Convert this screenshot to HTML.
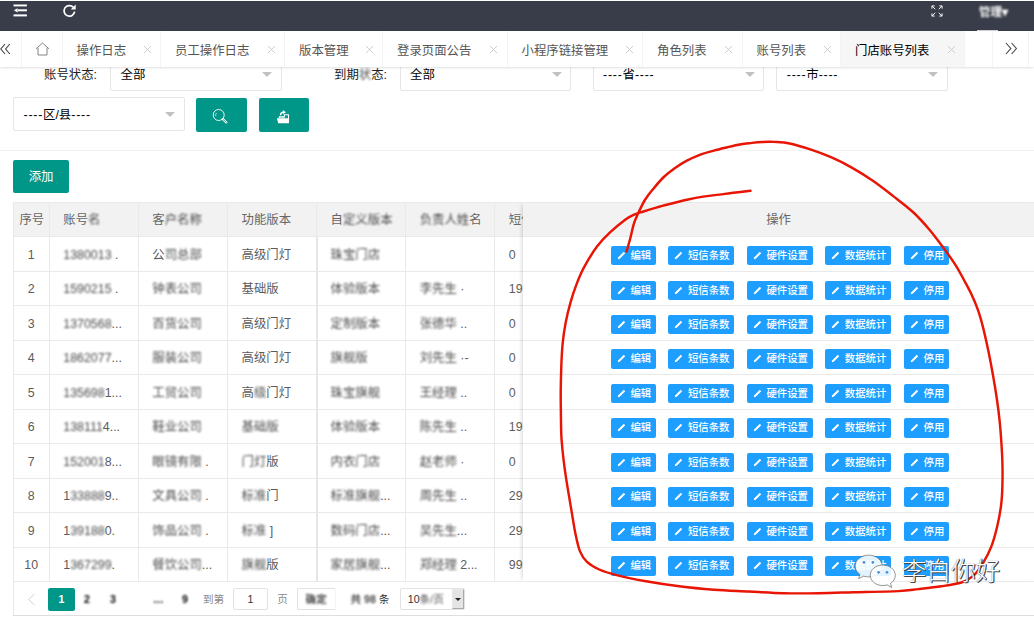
<!DOCTYPE html><html lang="zh-CN"><head><meta charset="utf-8"><title>门店账号列表</title><style>
*{box-sizing:border-box;margin:0;padding:0}
html,body{width:1034px;height:617px;overflow:hidden;background:#fff}
body{font-family:"Liberation Sans","Noto Sans CJK SC",sans-serif;font-size:12.4px;color:#333;position:relative}
.abs{position:absolute}
#hdr{z-index:3;left:0;top:1px;width:1034px;height:30px;background:#393d49}
#tabs{z-index:3;left:0;top:31px;width:1034px;height:36px;background:#fff;box-shadow:0 1px 2px rgba(0,0,0,.12)}
.tab{position:absolute;top:0;height:36px;line-height:36px;color:#555;font-size:12.4px;white-space:nowrap;border-right:1px solid #f4f4f4}
.tab span.t{position:absolute;top:1.5px}
.tab .x{position:absolute;top:13.5px;width:9px;height:9px}
.tab.on{background:#f6f6f6;color:#000}
.sel{position:absolute;height:34px;border:1px solid #e6e6e6;border-radius:2px;background:#fff;line-height:32px;color:#000;font-size:12.4px}
.sel .t{position:absolute;left:9.5px;top:1px;white-space:nowrap}
.sel .a{position:absolute;right:8.5px;top:14px;width:0;height:0;border-left:5px solid transparent;border-right:5px solid transparent;border-top:5.5px solid #c2c2c2}
.ds{font-weight:normal;letter-spacing:.75px}
.lbl{position:absolute;white-space:nowrap;color:#222;font-size:12.4px;line-height:16px}
.gbtn{position:absolute;background:#009688;border-radius:2px;color:#fff}
.hl{position:absolute;height:1px;background:#e9e9e9}
.vl{position:absolute;width:1px;background:#e9e9e9}
.th{position:absolute;color:#666;font-size:12.4px;line-height:34px;white-space:nowrap}
.td{position:absolute;color:#5c5c5c;font-size:12.4px;line-height:34px;white-space:nowrap}
.bl{filter:blur(.9px);opacity:.85;color:#2a2a2a}
.bb{position:absolute;height:19.4px;background:#1e9fff;border-radius:2px;color:#fff;font-size:10.4px;line-height:19.4px;font-weight:500;white-space:nowrap}
.bb svg{position:absolute;left:6px;top:5px;width:9px;height:9px}
.bb span{position:absolute;left:19.8px;top:0}
</style></head><body>
<div id="hdr" class="abs">
<svg class="abs" style="left:12.5px;top:3px;width:15px;height:14px" viewBox="0 0 15 14"><g fill="#fff"><rect x="0.5" y="0.5" width="13.4" height="1.9"/><rect x="4.6" y="5.3" width="9.3" height="2"/><rect x="0.5" y="10.4" width="13.4" height="2"/><path d="M0.9 6.3 L4.6 4.2 L4.6 8.4 Z"/></g></svg>
<svg class="abs" style="left:62px;top:3px;width:15px;height:14px" viewBox="0 0 15 14"><path d="M11.2 3.2 A5.3 5.3 0 1 0 12.6 7.6" fill="none" stroke="#fff" stroke-width="1.7"/><path d="M13.7 0.6 L13.7 5.6 L8.7 5.6 Z" fill="#fff"/></svg>
<svg class="abs" style="left:930.5px;top:3.5px;width:12px;height:12px" viewBox="0 0 13 13"><g stroke="#fff" stroke-width="1" fill="none"><path d="M1 4V1h3M1 1l3.6 3.6"/><path d="M9 1h3v3M12 1L8.400 4.6"/><path d="M1 9v3h3M1 12l3.600-3.600"/><path d="M12 9v3H9M12 12L8.400 8.400"/></g></svg>
<div class="abs" style="left:979px;top:2.500px;color:#fff;font-size:11.500px;line-height:16px;filter:blur(.9px);font-weight:bold">管理▾</div>
<div class="abs" style="left:977px;top:29px;width:21px;height:1px;background:#cfd0d4"></div>
</div>
<div id="tabs" class="abs">
<div class="tab" style="left:0;width:22px"><svg class="abs" style="left:0;top:12px;width:11px;height:12px" viewBox="0 0 11 12"><path d="M5 1L0.800 6L5 11M9.800 1L5.600 6L9.800 11" fill="none" stroke="#444" stroke-width="1.1"/></svg></div>
<div class="tab" style="left:22px;width:41px"><svg class="abs" style="left:12.5px;top:11px;width:15px;height:14px" viewBox="0 0 15 14"><path d="M1 6.800L7.500 1L14 6.800M3 5.600V13H12V5.600" fill="none" stroke="#777" stroke-width="0.9"/></svg></div>
<div class="tab" style="left:62.5px;width:98.5px"><span class="t" style="left:14px">操作日志</span><svg class="x" style="left:80.0px" viewBox="0 0 9 9"><path d="M1 1L8 8M8 1L1 8" stroke="#c8c8c8" stroke-width="0.9" fill="none"/></svg></div>
<div class="tab" style="left:161.0px;width:124.0px"><span class="t" style="left:14px">员工操作日志</span><svg class="x" style="left:105.5px" viewBox="0 0 9 9"><path d="M1 1L8 8M8 1L1 8" stroke="#c8c8c8" stroke-width="0.9" fill="none"/></svg></div>
<div class="tab" style="left:285.0px;width:98.0px"><span class="t" style="left:14px">版本管理</span><svg class="x" style="left:79.5px" viewBox="0 0 9 9"><path d="M1 1L8 8M8 1L1 8" stroke="#c8c8c8" stroke-width="0.9" fill="none"/></svg></div>
<div class="tab" style="left:383.0px;width:124.5px"><span class="t" style="left:14px">登录页面公告</span><svg class="x" style="left:106.0px" viewBox="0 0 9 9"><path d="M1 1L8 8M8 1L1 8" stroke="#c8c8c8" stroke-width="0.9" fill="none"/></svg></div>
<div class="tab" style="left:507.5px;width:135.5px"><span class="t" style="left:14px">小程序链接管理</span><svg class="x" style="left:117.0px" viewBox="0 0 9 9"><path d="M1 1L8 8M8 1L1 8" stroke="#c8c8c8" stroke-width="0.9" fill="none"/></svg></div>
<div class="tab" style="left:643.0px;width:99.5px"><span class="t" style="left:14px">角色列表</span><svg class="x" style="left:81.0px" viewBox="0 0 9 9"><path d="M1 1L8 8M8 1L1 8" stroke="#c8c8c8" stroke-width="0.9" fill="none"/></svg></div>
<div class="tab" style="left:742.5px;width:98.5px"><span class="t" style="left:14px">账号列表</span><svg class="x" style="left:80.0px" viewBox="0 0 9 9"><path d="M1 1L8 8M8 1L1 8" stroke="#c8c8c8" stroke-width="0.9" fill="none"/></svg></div>
<div class="tab on" style="left:841.0px;width:124.0px"><span class="t" style="left:14px">门店账号列表</span><svg class="x" style="left:105.5px" viewBox="0 0 9 9"><path d="M1 1L8 8M8 1L1 8" stroke="#c8c8c8" stroke-width="0.9" fill="none"/></svg></div>
<div class="tab" style="left:992px;width:37px;border-left:1px solid #f4f4f4"><svg class="abs" style="left:12px;top:11px;width:13px;height:13px" viewBox="0 0 13 13"><path d="M1 1L5.800 6.500L1 12M6.600 1L11.400 6.500L6.600 12" fill="none" stroke="#444" stroke-width="1.1"/></svg></div>
</div>
<div class="abs" style="left:0;top:0;width:1034px;height:617px;z-index:0">
<div class="lbl" style="left:44px;top:67px">账号状态:</div>
<div class="sel" style="left:110.0px;top:56.5px;width:171.5px"><span class="t">全部</span><i class="a"></i></div>
<div class="lbl" style="left:334px;top:67px">到期<span class="bl">状</span>态:</div>
<div class="sel" style="left:399.5px;top:56.5px;width:171.5px"><span class="t">全部</span><i class="a"></i></div>
<div class="sel" style="left:592.5px;top:56.5px;width:171.5px"><span class="t"><b class="ds">----</b>省<b class="ds">----</b></span><i class="a"></i></div>
<div class="sel" style="left:776.3px;top:56.5px;width:171.5px"><span class="t"><b class="ds">----</b>市<b class="ds">----</b></span><i class="a"></i></div>
<div class="sel" style="left:13.0px;top:97.0px;width:171.5px"><span class="t"><b class="ds">----</b>区/县<b class="ds">----</b></span><i class="a"></i></div>
</div>
<div class="gbtn" style="left:196.3px;top:98.3px;width:50.4px;height:33.6px"><svg class="abs" style="left:16px;top:10px;width:17px;height:17px" viewBox="0 0 17 17"><circle cx="6.700" cy="7" r="5.500" fill="none" stroke="#fff" stroke-width="0.9"/><path d="M3.800 8.200A3.200 3.200 0 0 1 4.500 5" fill="none" stroke="#fff" stroke-width="0.7"/><path d="M10.800 11.200L14.300 14.300" stroke="#fff" stroke-width="2.300" stroke-linecap="round"/><path d="M11.300 11.700L14 14" stroke="#009688" stroke-width="0.800" stroke-linecap="round"/></svg></div>
<div class="gbtn" style="left:259px;top:98.3px;width:50.4px;height:33.6px"><svg class="abs" style="left:11px;top:5.700px;width:26px;height:24px" viewBox="270 104 26 24"><path d="M276.900 118.300H288.800L289 123.200H278.200Z" fill="#fff"/><path d="M279.300 118.300V116.900H284.300V114.700H288.500V122" fill="none" stroke="#fff" stroke-width="1.100"/><path d="M280 117.600H284.800" stroke="#fff" stroke-width=".6" stroke-opacity=".7"/><path d="M280.500 115.300C280.500 113.200 281.700 112.200 283.400 112.200" fill="none" stroke="#fff" stroke-width="1.400"/><path d="M282.900 109.900L286 112.300L282.900 114.300Z" fill="#fff"/></svg></div>
<div class="hl" style="left:0;top:149.5px;width:1034px;background:#f2f2f2"></div>
<div class="gbtn" style="left:13px;top:159.8px;width:56.2px;height:33.2px;font-size:12.4px;line-height:35px;text-align:center">添加</div>
<div class="abs" style="left:13px;top:202.0px;width:1021px;height:34.8px;background:#f2f2f2"></div>
<div class="hl" style="left:13px;top:201.5px;width:1021px"></div>
<div class="hl" style="left:13px;top:236.3px;width:1021px"></div>
<div class="hl" style="left:13px;top:270.8px;width:1021px"></div>
<div class="hl" style="left:13px;top:305.2px;width:1021px"></div>
<div class="hl" style="left:13px;top:339.7px;width:1021px"></div>
<div class="hl" style="left:13px;top:374.2px;width:1021px"></div>
<div class="hl" style="left:13px;top:408.6px;width:1021px"></div>
<div class="hl" style="left:13px;top:443.1px;width:1021px"></div>
<div class="hl" style="left:13px;top:477.6px;width:1021px"></div>
<div class="hl" style="left:13px;top:512.1px;width:1021px"></div>
<div class="hl" style="left:13px;top:546.5px;width:1021px"></div>
<div class="hl" style="left:13px;top:581.0px;width:1021px"></div>
<div class="vl" style="left:12.5px;top:202.0px;height:414.0px"></div>
<div class="vl" style="left:48.8px;top:202.0px;height:379.5px"></div>
<div class="vl" style="left:137.8px;top:202.0px;height:379.5px"></div>
<div class="vl" style="left:227.0px;top:202.0px;height:379.5px"></div>
<div class="vl" style="left:316.1px;top:202.0px;height:379.5px"></div>
<div class="vl" style="left:405.2px;top:202.0px;height:379.5px"></div>
<div class="vl" style="left:494.3px;top:202.0px;height:379.5px"></div>
<div class="hl" style="left:13px;top:615.3px;width:1021px;background:#dedede"></div>
<div class="vl" style="left:315.6px;top:236.8px;height:344.7px;width:2.6px;background:#e6e6e6"></div>
<div class="abs" style="left:523.2px;top:202.0px;width:510.8px;height:379.5px;background:#fff;box-shadow:-4px 0 4px -3px rgba(0,0,0,.16)"></div>
<div class="abs" style="left:523.2px;top:202.0px;width:510.8px;height:34.8px;background:#f2f2f2"></div>
<div class="hl" style="left:523.2px;top:201.5px;width:510.8px"></div>
<div class="hl" style="left:523.2px;top:236.3px;width:510.8px"></div>
<div class="hl" style="left:523.2px;top:270.8px;width:510.8px"></div>
<div class="hl" style="left:523.2px;top:305.2px;width:510.8px"></div>
<div class="hl" style="left:523.2px;top:339.7px;width:510.8px"></div>
<div class="hl" style="left:523.2px;top:374.2px;width:510.8px"></div>
<div class="hl" style="left:523.2px;top:408.6px;width:510.8px"></div>
<div class="hl" style="left:523.2px;top:443.1px;width:510.8px"></div>
<div class="hl" style="left:523.2px;top:477.6px;width:510.8px"></div>
<div class="hl" style="left:523.2px;top:512.1px;width:510.8px"></div>
<div class="hl" style="left:523.2px;top:546.5px;width:510.8px"></div>
<div class="hl" style="left:523.2px;top:581.0px;width:510.8px"></div>
<div class="th" style="left:19.4px;top:203.3px">序号</div>
<div class="th" style="left:63.3px;top:203.3px">账号<span class="bl">名</span></div>
<div class="th" style="left:152.3px;top:203.3px">客<span class="bl">户名称</span></div>
<div class="th" style="left:241.5px;top:203.3px">功能版本</div>
<div class="th" style="left:330.6px;top:203.3px">自<span class="bl">定义版本</span></div>
<div class="th" style="left:419.7px;top:203.3px"><span class="bl">负责人姓</span>名</div>
<div class="abs" style="left:494.800px;top:203.3px;width:28.400px;height:34px;overflow:hidden"><div class="th" style="left:14px;top:0">短信条数</div></div>
<div class="th" style="left:523.2px;top:203.3px;width:510.8px;text-align:center">操作</div>
<div class="td" style="left:13px;top:237.7px;width:36.3px;text-align:center">1</div>
<div class="td" style="left:63.3px;top:237.7px"><span class="bl">1380013</span> .</div>
<div class="td" style="left:152.3px;top:237.7px">公<span class="bl">司总部</span></div>
<div class="td" style="left:241.5px;top:237.7px">高级门灯</div>
<div class="td" style="left:330.6px;top:237.7px"><span class="bl">珠宝门店</span></div>
<div class="abs" style="left:494.800px;top:237.7px;width:28.400px;height:34px;overflow:hidden"><div class="td" style="left:14px;top:0">0</div></div>
<div class="bb" style="left:610.6px;top:246.0px;width:45.1px"><svg viewBox="0 0 9 9"><path d="M0.800 8.200L1.300 6.300L6.800 0.800L8.200 2.200L2.700 7.700Z" fill="#fff"/></svg><span>编辑</span></div>
<div class="bb" style="left:668.1px;top:246.0px;width:66.0px"><svg viewBox="0 0 9 9"><path d="M0.800 8.200L1.300 6.300L6.800 0.800L8.200 2.200L2.700 7.700Z" fill="#fff"/></svg><span>短信条数</span></div>
<div class="bb" style="left:746.6px;top:246.0px;width:66.0px"><svg viewBox="0 0 9 9"><path d="M0.800 8.200L1.300 6.300L6.800 0.800L8.200 2.200L2.700 7.700Z" fill="#fff"/></svg><span>硬件设置</span></div>
<div class="bb" style="left:825.0px;top:246.0px;width:66.2px"><svg viewBox="0 0 9 9"><path d="M0.800 8.200L1.300 6.300L6.800 0.800L8.200 2.200L2.700 7.700Z" fill="#fff"/></svg><span>数据统计</span></div>
<div class="bb" style="left:903.8px;top:246.0px;width:45.0px"><svg viewBox="0 0 9 9"><path d="M0.800 8.200L1.300 6.300L6.800 0.800L8.200 2.200L2.700 7.700Z" fill="#fff"/></svg><span>停用</span></div>
<div class="td" style="left:13px;top:272.2px;width:36.3px;text-align:center">2</div>
<div class="td" style="left:63.3px;top:272.2px"><span class="bl">1590215</span> .</div>
<div class="td" style="left:152.3px;top:272.2px"><span class="bl">钟表公司</span></div>
<div class="td" style="left:241.5px;top:272.2px">基础版</div>
<div class="td" style="left:330.6px;top:272.2px"><span class="bl">体验版本</span></div>
<div class="td" style="left:419.7px;top:272.2px"><span class="bl">李先生</span> ·</div>
<div class="abs" style="left:494.800px;top:272.2px;width:28.400px;height:34px;overflow:hidden"><div class="td" style="left:14px;top:0">19</div></div>
<div class="bb" style="left:610.6px;top:280.5px;width:45.1px"><svg viewBox="0 0 9 9"><path d="M0.800 8.200L1.300 6.300L6.800 0.800L8.200 2.200L2.700 7.700Z" fill="#fff"/></svg><span>编辑</span></div>
<div class="bb" style="left:668.1px;top:280.5px;width:66.0px"><svg viewBox="0 0 9 9"><path d="M0.800 8.200L1.300 6.300L6.800 0.800L8.200 2.200L2.700 7.700Z" fill="#fff"/></svg><span>短信条数</span></div>
<div class="bb" style="left:746.6px;top:280.5px;width:66.0px"><svg viewBox="0 0 9 9"><path d="M0.800 8.200L1.300 6.300L6.800 0.800L8.200 2.200L2.700 7.700Z" fill="#fff"/></svg><span>硬件设置</span></div>
<div class="bb" style="left:825.0px;top:280.5px;width:66.2px"><svg viewBox="0 0 9 9"><path d="M0.800 8.200L1.300 6.300L6.800 0.800L8.200 2.200L2.700 7.700Z" fill="#fff"/></svg><span>数据统计</span></div>
<div class="bb" style="left:903.8px;top:280.5px;width:45.0px"><svg viewBox="0 0 9 9"><path d="M0.800 8.200L1.300 6.300L6.800 0.800L8.200 2.200L2.700 7.700Z" fill="#fff"/></svg><span>停用</span></div>
<div class="td" style="left:13px;top:306.6px;width:36.3px;text-align:center">3</div>
<div class="td" style="left:63.3px;top:306.6px"><span class="bl">1370568</span>...</div>
<div class="td" style="left:152.3px;top:306.6px"><span class="bl">百货公司</span></div>
<div class="td" style="left:241.5px;top:306.6px">高级门灯</div>
<div class="td" style="left:330.6px;top:306.6px"><span class="bl">定制版本</span></div>
<div class="td" style="left:419.7px;top:306.6px"><span class="bl">张德华</span> ..</div>
<div class="abs" style="left:494.800px;top:306.6px;width:28.400px;height:34px;overflow:hidden"><div class="td" style="left:14px;top:0">0</div></div>
<div class="bb" style="left:610.6px;top:314.9px;width:45.1px"><svg viewBox="0 0 9 9"><path d="M0.800 8.200L1.300 6.300L6.800 0.800L8.200 2.200L2.700 7.700Z" fill="#fff"/></svg><span>编辑</span></div>
<div class="bb" style="left:668.1px;top:314.9px;width:66.0px"><svg viewBox="0 0 9 9"><path d="M0.800 8.200L1.300 6.300L6.800 0.800L8.200 2.200L2.700 7.700Z" fill="#fff"/></svg><span>短信条数</span></div>
<div class="bb" style="left:746.6px;top:314.9px;width:66.0px"><svg viewBox="0 0 9 9"><path d="M0.800 8.200L1.300 6.300L6.800 0.800L8.200 2.200L2.700 7.700Z" fill="#fff"/></svg><span>硬件设置</span></div>
<div class="bb" style="left:825.0px;top:314.9px;width:66.2px"><svg viewBox="0 0 9 9"><path d="M0.800 8.200L1.300 6.300L6.800 0.800L8.200 2.200L2.700 7.700Z" fill="#fff"/></svg><span>数据统计</span></div>
<div class="bb" style="left:903.8px;top:314.9px;width:45.0px"><svg viewBox="0 0 9 9"><path d="M0.800 8.200L1.300 6.300L6.800 0.800L8.200 2.200L2.700 7.700Z" fill="#fff"/></svg><span>停用</span></div>
<div class="td" style="left:13px;top:341.1px;width:36.3px;text-align:center">4</div>
<div class="td" style="left:63.3px;top:341.1px"><span class="bl">1862077</span>...</div>
<div class="td" style="left:152.3px;top:341.1px"><span class="bl">服装公司</span></div>
<div class="td" style="left:241.5px;top:341.1px">高级门灯</div>
<div class="td" style="left:330.6px;top:341.1px"><span class="bl">旗舰版</span></div>
<div class="td" style="left:419.7px;top:341.1px"><span class="bl">刘先生</span> ·-</div>
<div class="abs" style="left:494.800px;top:341.1px;width:28.400px;height:34px;overflow:hidden"><div class="td" style="left:14px;top:0">0</div></div>
<div class="bb" style="left:610.6px;top:349.4px;width:45.1px"><svg viewBox="0 0 9 9"><path d="M0.800 8.200L1.300 6.300L6.800 0.800L8.200 2.200L2.700 7.700Z" fill="#fff"/></svg><span>编辑</span></div>
<div class="bb" style="left:668.1px;top:349.4px;width:66.0px"><svg viewBox="0 0 9 9"><path d="M0.800 8.200L1.300 6.300L6.800 0.800L8.200 2.200L2.700 7.700Z" fill="#fff"/></svg><span>短信条数</span></div>
<div class="bb" style="left:746.6px;top:349.4px;width:66.0px"><svg viewBox="0 0 9 9"><path d="M0.800 8.200L1.300 6.300L6.800 0.800L8.200 2.200L2.700 7.700Z" fill="#fff"/></svg><span>硬件设置</span></div>
<div class="bb" style="left:825.0px;top:349.4px;width:66.2px"><svg viewBox="0 0 9 9"><path d="M0.800 8.200L1.300 6.300L6.800 0.800L8.200 2.200L2.700 7.700Z" fill="#fff"/></svg><span>数据统计</span></div>
<div class="bb" style="left:903.8px;top:349.4px;width:45.0px"><svg viewBox="0 0 9 9"><path d="M0.800 8.200L1.300 6.300L6.800 0.800L8.200 2.200L2.700 7.700Z" fill="#fff"/></svg><span>停用</span></div>
<div class="td" style="left:13px;top:375.6px;width:36.3px;text-align:center">5</div>
<div class="td" style="left:63.3px;top:375.6px"><span class="bl">135698</span>1...</div>
<div class="td" style="left:152.3px;top:375.6px"><span class="bl">工贸公司</span></div>
<div class="td" style="left:241.5px;top:375.6px">高<span class="bl">级</span>门灯</div>
<div class="td" style="left:330.6px;top:375.6px"><span class="bl">珠宝旗舰</span></div>
<div class="td" style="left:419.7px;top:375.6px"><span class="bl">王经理</span> ..</div>
<div class="abs" style="left:494.800px;top:375.6px;width:28.400px;height:34px;overflow:hidden"><div class="td" style="left:14px;top:0">0</div></div>
<div class="bb" style="left:610.6px;top:383.9px;width:45.1px"><svg viewBox="0 0 9 9"><path d="M0.800 8.200L1.300 6.300L6.800 0.800L8.200 2.200L2.700 7.700Z" fill="#fff"/></svg><span>编辑</span></div>
<div class="bb" style="left:668.1px;top:383.9px;width:66.0px"><svg viewBox="0 0 9 9"><path d="M0.800 8.200L1.300 6.300L6.800 0.800L8.200 2.200L2.700 7.700Z" fill="#fff"/></svg><span>短信条数</span></div>
<div class="bb" style="left:746.6px;top:383.9px;width:66.0px"><svg viewBox="0 0 9 9"><path d="M0.800 8.200L1.300 6.300L6.800 0.800L8.200 2.200L2.700 7.700Z" fill="#fff"/></svg><span>硬件设置</span></div>
<div class="bb" style="left:825.0px;top:383.9px;width:66.2px"><svg viewBox="0 0 9 9"><path d="M0.800 8.200L1.300 6.300L6.800 0.800L8.200 2.200L2.700 7.700Z" fill="#fff"/></svg><span>数据统计</span></div>
<div class="bb" style="left:903.8px;top:383.9px;width:45.0px"><svg viewBox="0 0 9 9"><path d="M0.800 8.200L1.300 6.300L6.800 0.800L8.200 2.200L2.700 7.700Z" fill="#fff"/></svg><span>停用</span></div>
<div class="td" style="left:13px;top:410.0px;width:36.3px;text-align:center">6</div>
<div class="td" style="left:63.3px;top:410.0px"><span class="bl">138111</span>4...</div>
<div class="td" style="left:152.3px;top:410.0px"><span class="bl">鞋业公司</span></div>
<div class="td" style="left:241.5px;top:410.0px"><span class="bl">基础版</span></div>
<div class="td" style="left:330.6px;top:410.0px"><span class="bl">体验版本</span></div>
<div class="td" style="left:419.7px;top:410.0px"><span class="bl">陈先生</span> ..</div>
<div class="abs" style="left:494.800px;top:410.0px;width:28.400px;height:34px;overflow:hidden"><div class="td" style="left:14px;top:0">19</div></div>
<div class="bb" style="left:610.6px;top:418.3px;width:45.1px"><svg viewBox="0 0 9 9"><path d="M0.800 8.200L1.300 6.300L6.800 0.800L8.200 2.200L2.700 7.700Z" fill="#fff"/></svg><span>编辑</span></div>
<div class="bb" style="left:668.1px;top:418.3px;width:66.0px"><svg viewBox="0 0 9 9"><path d="M0.800 8.200L1.300 6.300L6.800 0.800L8.200 2.200L2.700 7.700Z" fill="#fff"/></svg><span>短信条数</span></div>
<div class="bb" style="left:746.6px;top:418.3px;width:66.0px"><svg viewBox="0 0 9 9"><path d="M0.800 8.200L1.300 6.300L6.800 0.800L8.200 2.200L2.700 7.700Z" fill="#fff"/></svg><span>硬件设置</span></div>
<div class="bb" style="left:825.0px;top:418.3px;width:66.2px"><svg viewBox="0 0 9 9"><path d="M0.800 8.200L1.300 6.300L6.800 0.800L8.200 2.200L2.700 7.700Z" fill="#fff"/></svg><span>数据统计</span></div>
<div class="bb" style="left:903.8px;top:418.3px;width:45.0px"><svg viewBox="0 0 9 9"><path d="M0.800 8.200L1.300 6.300L6.800 0.800L8.200 2.200L2.700 7.700Z" fill="#fff"/></svg><span>停用</span></div>
<div class="td" style="left:13px;top:444.5px;width:36.3px;text-align:center">7</div>
<div class="td" style="left:63.3px;top:444.5px"><span class="bl">152001</span>8...</div>
<div class="td" style="left:152.3px;top:444.5px"><span class="bl">眼镜有限</span> .</div>
<div class="td" style="left:241.5px;top:444.5px"><span class="bl">门灯</span>版</div>
<div class="td" style="left:330.6px;top:444.5px"><span class="bl">内衣门店</span></div>
<div class="td" style="left:419.7px;top:444.5px"><span class="bl">赵老师</span> ·</div>
<div class="abs" style="left:494.800px;top:444.5px;width:28.400px;height:34px;overflow:hidden"><div class="td" style="left:14px;top:0">0</div></div>
<div class="bb" style="left:610.6px;top:452.8px;width:45.1px"><svg viewBox="0 0 9 9"><path d="M0.800 8.200L1.300 6.300L6.800 0.800L8.200 2.200L2.700 7.700Z" fill="#fff"/></svg><span>编辑</span></div>
<div class="bb" style="left:668.1px;top:452.8px;width:66.0px"><svg viewBox="0 0 9 9"><path d="M0.800 8.200L1.300 6.300L6.800 0.800L8.200 2.200L2.700 7.700Z" fill="#fff"/></svg><span>短信条数</span></div>
<div class="bb" style="left:746.6px;top:452.8px;width:66.0px"><svg viewBox="0 0 9 9"><path d="M0.800 8.200L1.300 6.300L6.800 0.800L8.200 2.200L2.700 7.700Z" fill="#fff"/></svg><span>硬件设置</span></div>
<div class="bb" style="left:825.0px;top:452.8px;width:66.2px"><svg viewBox="0 0 9 9"><path d="M0.800 8.200L1.300 6.300L6.800 0.800L8.200 2.200L2.700 7.700Z" fill="#fff"/></svg><span>数据统计</span></div>
<div class="bb" style="left:903.8px;top:452.8px;width:45.0px"><svg viewBox="0 0 9 9"><path d="M0.800 8.200L1.300 6.300L6.800 0.800L8.200 2.200L2.700 7.700Z" fill="#fff"/></svg><span>停用</span></div>
<div class="td" style="left:13px;top:479.0px;width:36.3px;text-align:center">8</div>
<div class="td" style="left:63.3px;top:479.0px">1<span class="bl">33888</span>9..</div>
<div class="td" style="left:152.3px;top:479.0px"><span class="bl">文具公司</span> .</div>
<div class="td" style="left:241.5px;top:479.0px"><span class="bl">标准</span>门</div>
<div class="td" style="left:330.6px;top:479.0px"><span class="bl">标准旗舰</span>...</div>
<div class="td" style="left:419.7px;top:479.0px"><span class="bl">周先生</span> ..</div>
<div class="abs" style="left:494.800px;top:479.0px;width:28.400px;height:34px;overflow:hidden"><div class="td" style="left:14px;top:0">29</div></div>
<div class="bb" style="left:610.6px;top:487.3px;width:45.1px"><svg viewBox="0 0 9 9"><path d="M0.800 8.200L1.300 6.300L6.800 0.800L8.200 2.200L2.700 7.700Z" fill="#fff"/></svg><span>编辑</span></div>
<div class="bb" style="left:668.1px;top:487.3px;width:66.0px"><svg viewBox="0 0 9 9"><path d="M0.800 8.200L1.300 6.300L6.800 0.800L8.200 2.200L2.700 7.700Z" fill="#fff"/></svg><span>短信条数</span></div>
<div class="bb" style="left:746.6px;top:487.3px;width:66.0px"><svg viewBox="0 0 9 9"><path d="M0.800 8.200L1.300 6.300L6.800 0.800L8.200 2.200L2.700 7.700Z" fill="#fff"/></svg><span>硬件设置</span></div>
<div class="bb" style="left:825.0px;top:487.3px;width:66.2px"><svg viewBox="0 0 9 9"><path d="M0.800 8.200L1.300 6.300L6.800 0.800L8.200 2.200L2.700 7.700Z" fill="#fff"/></svg><span>数据统计</span></div>
<div class="bb" style="left:903.8px;top:487.3px;width:45.0px"><svg viewBox="0 0 9 9"><path d="M0.800 8.200L1.300 6.300L6.800 0.800L8.200 2.200L2.700 7.700Z" fill="#fff"/></svg><span>停用</span></div>
<div class="td" style="left:13px;top:513.5px;width:36.3px;text-align:center">9</div>
<div class="td" style="left:63.3px;top:513.5px">1<span class="bl">39188</span>0.</div>
<div class="td" style="left:152.3px;top:513.5px"><span class="bl">饰品公司</span> .</div>
<div class="td" style="left:241.5px;top:513.5px"><span class="bl">标准</span> ]</div>
<div class="td" style="left:330.6px;top:513.5px"><span class="bl">数码门店</span>...</div>
<div class="td" style="left:419.7px;top:513.5px"><span class="bl">吴先生</span>...</div>
<div class="abs" style="left:494.800px;top:513.5px;width:28.400px;height:34px;overflow:hidden"><div class="td" style="left:14px;top:0">29</div></div>
<div class="bb" style="left:610.6px;top:521.8px;width:45.1px"><svg viewBox="0 0 9 9"><path d="M0.800 8.200L1.300 6.300L6.800 0.800L8.200 2.200L2.700 7.700Z" fill="#fff"/></svg><span>编辑</span></div>
<div class="bb" style="left:668.1px;top:521.8px;width:66.0px"><svg viewBox="0 0 9 9"><path d="M0.800 8.200L1.300 6.300L6.800 0.800L8.200 2.200L2.700 7.700Z" fill="#fff"/></svg><span>短信条数</span></div>
<div class="bb" style="left:746.6px;top:521.8px;width:66.0px"><svg viewBox="0 0 9 9"><path d="M0.800 8.200L1.300 6.300L6.800 0.800L8.200 2.200L2.700 7.700Z" fill="#fff"/></svg><span>硬件设置</span></div>
<div class="bb" style="left:825.0px;top:521.8px;width:66.2px"><svg viewBox="0 0 9 9"><path d="M0.800 8.200L1.300 6.300L6.800 0.800L8.200 2.200L2.700 7.700Z" fill="#fff"/></svg><span>数据统计</span></div>
<div class="bb" style="left:903.8px;top:521.8px;width:45.0px"><svg viewBox="0 0 9 9"><path d="M0.800 8.200L1.300 6.300L6.800 0.800L8.200 2.200L2.700 7.700Z" fill="#fff"/></svg><span>停用</span></div>
<div class="td" style="left:13px;top:547.9px;width:36.3px;text-align:center">10</div>
<div class="td" style="left:63.3px;top:547.9px">1<span class="bl">367299</span>.</div>
<div class="td" style="left:152.3px;top:547.9px"><span class="bl">餐饮公司</span>...</div>
<div class="td" style="left:241.5px;top:547.9px"><span class="bl">旗舰</span>版</div>
<div class="td" style="left:330.6px;top:547.9px"><span class="bl">家居旗舰</span>...</div>
<div class="td" style="left:419.7px;top:547.9px"><span class="bl">郑经理</span> 2...</div>
<div class="abs" style="left:494.800px;top:547.9px;width:28.400px;height:34px;overflow:hidden"><div class="td" style="left:14px;top:0">99</div></div>
<div class="bb" style="left:610.6px;top:556.2px;width:45.1px"><svg viewBox="0 0 9 9"><path d="M0.800 8.200L1.300 6.300L6.800 0.800L8.200 2.200L2.700 7.700Z" fill="#fff"/></svg><span>编辑</span></div>
<div class="bb" style="left:668.1px;top:556.2px;width:66.0px"><svg viewBox="0 0 9 9"><path d="M0.800 8.200L1.300 6.300L6.800 0.800L8.200 2.200L2.700 7.700Z" fill="#fff"/></svg><span>短信条数</span></div>
<div class="bb" style="left:746.6px;top:556.2px;width:66.0px"><svg viewBox="0 0 9 9"><path d="M0.800 8.200L1.300 6.300L6.800 0.800L8.200 2.200L2.700 7.700Z" fill="#fff"/></svg><span>硬件设置</span></div>
<div class="bb" style="left:825.0px;top:556.2px;width:66.2px"><svg viewBox="0 0 9 9"><path d="M0.800 8.200L1.300 6.300L6.800 0.800L8.200 2.200L2.700 7.700Z" fill="#fff"/></svg><span>数据统计</span></div>
<div class="bb" style="left:903.8px;top:556.2px;width:45.0px"><svg viewBox="0 0 9 9"><path d="M0.800 8.200L1.300 6.300L6.800 0.800L8.200 2.200L2.700 7.700Z" fill="#fff"/></svg><span>停用</span></div>
<svg class="abs" style="left:27px;top:592.500px;width:9px;height:13px" viewBox="0 0 9 13"><path d="M7.500 1L1.500 6.500L7.500 12" fill="none" stroke="#d2d2d2" stroke-width="1"/></svg>
<div class="abs" style="left:48.300px;top:588.300px;width:26.400px;height:22.700px;background:#009688;border-radius:2px;color:#fff;font-size:10.600px;line-height:22.700px;text-align:center;font-weight:bold">1</div>
<div class="abs" style="left:84.0px;top:592px;font-size:10.600px;line-height:15px;color:#000;font-weight:bold;filter:blur(.9px)">2</div>
<div class="abs" style="left:110.0px;top:592px;font-size:10.600px;line-height:15px;color:#000;font-weight:bold;filter:blur(.9px)">3</div>
<div class="abs" style="left:153.0px;top:592px;font-size:10.600px;line-height:15px;color:#000;font-weight:bold;filter:blur(.9px)">…</div>
<div class="abs" style="left:182.0px;top:592px;font-size:10.600px;line-height:15px;color:#000;font-weight:bold;filter:blur(.9px)">9</div>
<div class="abs" style="left:203px;top:592px;font-size:10.600px;line-height:15px;color:#8a8a8a">到第</div>
<div class="abs" style="left:233.300px;top:588.300px;width:34.500px;height:21.700px;border:1px solid #e2e2e2;border-radius:2px;font-size:10.600px;line-height:20px;text-align:center;color:#333">1</div>
<div class="abs" style="left:277.300px;top:592px;font-size:10.600px;line-height:15px;color:#8a8a8a">页</div>
<div class="abs" style="left:296.700px;top:588.300px;width:39px;height:21.700px;border:1px solid #e2e2e2;border-radius:2px;font-size:10.600px;line-height:20px;text-align:center;color:#111;border-right-color:#f4f4f4"><span class="bl" style="font-weight:bold">确定</span></div>
<div class="abs" style="left:350.5px;top:592px;font-size:10.600px;line-height:15px;color:#333;white-space:nowrap"><span class="bl" style="font-weight:bold">共 98 </span>条</div>
<div class="abs" style="left:399.800px;top:588.300px;width:65.200px;height:21.700px;border:1px solid #e2e2e2;border-radius:2px;font-size:10.600px;line-height:20px;color:#333"><span style="position:absolute;left:7px">10<span class="bl">条/页</span></span><span class="abs" style="right:0;top:0;width:12px;height:19.700px;border:1px solid #e8e8e8;border-right-color:#aaa;border-bottom-color:#aaa;background:#e4e4e4"></span><i class="abs" style="right:2.500px;top:8.500px;width:0;height:0;border-left:3px solid transparent;border-right:3px solid transparent;border-top:3.500px solid #222"></i></div>
<svg class="abs" style="left:0;top:0;width:1034px;height:617px" viewBox="0 0 1034 617"><path d="M626.6 251.4 C627.2 249.2 629.1 242.9 630.3 238.3 C631.5 233.7 632.6 227.8 633.9 223.7 C635.2 219.6 636.3 217.4 638.1 213.5 C639.9 209.6 642.4 204.1 644.9 200.0 C647.4 195.9 649.9 193.0 653.0 189.2 C656.1 185.4 660.2 180.5 663.8 177.0 C667.4 173.5 670.9 170.9 674.7 168.2 C678.6 165.5 682.6 163.0 686.9 160.7 C691.2 158.4 695.9 156.3 700.4 154.6 C704.9 152.9 709.4 151.8 713.9 150.6 C718.4 149.4 723.0 148.3 727.5 147.2 C732.0 146.1 736.9 144.9 741.0 144.2 C745.1 143.5 748.3 143.3 751.9 142.9 C755.5 142.5 759.0 142.2 762.7 142.0 C766.4 141.8 769.5 141.7 774.0 141.9 C778.5 142.2 783.6 142.2 789.6 143.5 C795.6 144.8 803.4 147.1 810.3 149.4 C817.2 151.7 824.1 154.2 831.0 157.2 C837.9 160.2 844.9 163.7 851.8 167.6 C858.7 171.5 865.6 175.8 872.5 180.5 C879.4 185.2 886.3 190.7 893.2 196.1 C900.1 201.5 908.0 207.4 914.0 213.0 C920.0 218.6 924.8 224.2 929.5 229.8 C934.2 235.4 938.2 240.8 942.5 246.6 C946.8 252.4 951.8 259.2 955.4 264.8 C959.0 270.4 961.4 275.2 964.0 280.0 C966.6 284.8 968.9 288.8 971.2 293.8 C973.6 298.9 976.0 304.3 978.1 310.3 C980.2 316.3 981.8 322.2 983.6 329.6 C985.4 337.0 987.5 346.6 989.1 354.4 C990.7 362.2 991.9 369.0 993.2 376.4 C994.5 383.8 995.7 391.1 996.8 398.5 C997.9 405.9 998.9 413.6 999.6 420.5 C1000.3 427.4 1000.7 432.9 1001.2 440.0 C1001.7 447.1 1002.2 455.2 1002.4 462.9 C1002.6 470.5 1002.6 478.7 1002.4 485.9 C1002.2 493.1 1001.9 499.3 1001.0 506.0 C1000.1 512.7 998.9 519.3 997.3 526.0 C995.7 532.7 993.9 539.9 991.5 546.1 C989.1 552.3 986.0 558.3 982.9 563.3 C979.8 568.3 976.5 573.0 972.9 576.2 C969.3 579.4 966.6 580.8 961.4 582.5 C956.1 584.2 948.6 585.2 941.4 586.3 C934.2 587.4 925.6 588.3 918.4 589.1 C911.2 589.9 909.1 590.6 898.3 591.1 C887.5 591.6 866.7 591.9 853.4 592.2 C840.1 592.6 830.1 593.0 818.5 593.2 C806.9 593.4 795.3 593.5 783.7 593.2 C772.1 592.9 760.5 592.1 748.9 591.5 C737.3 590.9 725.7 590.6 714.1 589.7 C702.5 588.8 690.9 587.7 679.3 586.2 C667.7 584.8 655.0 582.9 644.5 581.0 C634.0 579.1 624.1 577.0 616.6 575.1 C609.1 573.2 604.1 571.7 599.2 569.5 C594.3 567.3 590.2 564.9 587.0 561.9 C583.8 558.9 581.9 556.0 580.0 551.4 C578.1 546.8 577.0 541.0 575.5 534.0 C574.0 527.0 572.7 517.7 571.3 509.6 C569.9 501.5 568.5 493.4 567.2 485.3 C565.9 477.2 564.6 468.4 563.7 460.9 C562.8 453.3 562.1 446.6 561.6 440.0 C561.1 433.4 561.1 429.5 561.0 421.6 C560.9 413.7 560.7 401.6 560.7 392.4 C560.8 383.2 561.0 374.4 561.3 366.2 C561.6 357.9 562.0 350.2 562.7 342.9 C563.4 335.6 564.4 329.3 565.7 322.5 C567.0 315.7 568.8 308.4 570.6 302.1 C572.4 295.8 574.2 290.4 576.4 284.6 C578.6 278.8 580.6 273.7 584.0 267.4 C587.4 261.1 592.7 252.4 597.0 246.6 C601.3 240.8 605.2 236.9 610.0 232.4 C614.8 227.9 621.5 222.4 625.5 219.4 C629.5 216.4 631.1 215.9 634.1 214.6 C637.1 213.3 639.7 212.7 643.5 211.5 C647.3 210.3 652.6 208.7 657.1 207.4 C661.6 206.1 665.6 205.1 670.6 203.8 C675.6 202.5 681.5 200.9 686.9 199.7 C692.3 198.5 697.7 197.4 703.1 196.6 C708.5 195.8 714.0 195.3 719.4 194.6 C724.8 193.9 730.4 193.1 735.6 192.5 C740.8 191.9 748.0 191.1 750.5 190.8" fill="none" stroke="#e81505" stroke-width="2.45" stroke-linecap="round" stroke-linejoin="round"/></svg>
<svg class="abs" style="left:852.8px;top:552.3px;width:46px;height:39.7px" viewBox="0 0 44 38"><g fill="#fff" fill-opacity=".88" stroke="#555" stroke-width=".6"><path d="M15 3C7.500 3 2 7.800 2 13.500c0 3.300 1.800 6.100 4.600 8L5.400 25.500l4.600-2.400c1.600.5 3.200.7 5 .7 7.500 0 13-4.700 13-10.300S22.500 3 15 3z"/><path d="M28.500 12.500c-6.800 0-12 4.400-12 9.800s5.200 9.800 12 9.800c1.500 0 2.900-.2 4.200-.6l4.300 2.500-1.100-3.900c2.800-1.800 4.600-4.600 4.600-7.800 0-5.400-5.200-9.800-12-9.800z"/></g><g fill="#4a90d9"><circle cx="10.500" cy="10" r="1.300"/><circle cx="19" cy="10" r="1.300"/><circle cx="24.500" cy="19.500" r="1.300"/><circle cx="32.500" cy="19.500" r="1.300"/></g></svg>
<div class="abs" style="left:901.800px;top:556px;font-size:24.600px;line-height:32px;color:#fff;font-weight:300;white-space:nowrap;text-shadow:1px 1px 0 #444,0 0 1px #444,1px 0 0 #555">李白你好</div>
</body></html>
